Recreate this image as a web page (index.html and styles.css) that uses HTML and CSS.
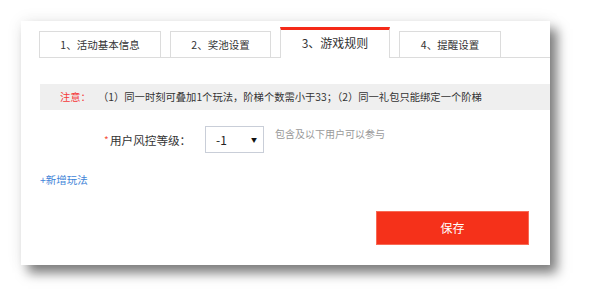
FILE: index.html
```html
<!DOCTYPE html>
<html lang="zh-CN">
<head>
<meta charset="utf-8">
<title>游戏规则</title>
<link rel="stylesheet" href="styles.css">
</head>
<body>
<div class="card">
  <div class="tabs">
    <div class="tab tab-1">1、活动基本信息</div>
    <div class="tab tab-2">2、奖池设置</div>
    <div class="tab tab-3 active">3、游戏规则</div>
    <div class="tab tab-4">4、提醒设置</div>
  </div>
  <div class="notice">
    <span class="notice-label">注意：</span>
    <span class="notice-text">（1）同一时刻可叠加1个玩法，阶梯个数需小于33；（2）同一礼包只能绑定一个阶梯</span>
  </div>
  <div class="form-row">
    <span class="req">*</span><span class="label">用户风控等级：</span>
    <div class="select"><span class="select-val">-1</span><span class="arrow">▼</span></div>
    <span class="hint">包含及以下用户可以参与</span>
  </div>
  <div class="add">+新增玩法</div>
  <div class="actions">
    <button class="save">保存</button>
  </div>
</div>
</body>
</html>
```
FILE: styles.css
```css
html, body {
  margin: 0;
  padding: 0;
  background: #fff;
}
body {
  width: 592px;
  height: 307px;
  overflow: hidden;
  font-family: "Noto Sans CJK SC", "Noto Sans", sans-serif;
  color: #333;
}
.card {
  margin: 21px 0 0 21px;
  width: 529px;
  height: 244px;
  box-sizing: border-box;
  padding-left: 18px;
  background: #fff;
  box-shadow: 7px 8px 11px rgba(0, 0, 0, 0.5), 0 0 16px rgba(0, 0, 0, 0.07);
  display: flex;
  flex-direction: column;
}
.tabs {
  margin-top: 6px;
  height: 30px;
  display: flex;
  align-items: flex-end;
  gap: 9px;
  border-bottom: 1px solid #dcdcdc;
}
.tab {
  box-sizing: border-box;
  height: 26px;
  border: 1px solid #dcdcdc;
  border-bottom: none;
  display: flex;
  align-items: center;
  justify-content: center;
  font-size: 10.5px;
  line-height: 14px;
  color: #333;
  background: #fff;
}
.tab-1 { width: 122px; }
.tab-2 { width: 101px; }
.tab-3 { width: 110px; }
.tab-4 { width: 102px; }
.tab.active {
  height: 31px;
  margin-bottom: -1px;
  border-top: 3px solid #f52a18;
  font-size: 12px;
  padding-bottom: 3px;
}
.notice {
  margin-top: 26px;
  margin-left: 1px;
  height: 26px;
  background: #efefef;
  display: flex;
  align-items: center;
  padding-left: 20px;
  font-size: 10.3px;
  line-height: 14px;
}
.notice-label {
  color: #f53b3b;
  width: 38px;
}
.notice-text {
  color: #333;
}
.form-row {
  margin-top: 16px;
  height: 27px;
  display: flex;
  align-items: center;
  padding-left: 65px;
}
.req {
  color: #f5533d;
  font-size: 10px;
  width: 6px;
  line-height: 12px;
}
.label {
  font-size: 11.6px;
  line-height: 14px;
  color: #333;
  width: 95px;
}
.select {
  box-sizing: border-box;
  width: 59px;
  height: 27px;
  border: 1px solid #c9ced8;
  display: flex;
  align-items: center;
  padding-left: 10px;
  padding-right: 6px;
}
.select-val {
  font-size: 12px;
  line-height: 14px;
  color: #222;
  flex: 1;
}
.arrow {
  font-size: 6px;
  line-height: 10px;
  color: #111;
}
.hint {
  align-self: flex-start;
  margin-top: 1px;
  margin-left: 11px;
  font-size: 10px;
  line-height: 14px;
  color: #999;
}
.add {
  margin-top: 20px;
  margin-left: 1px;
  font-size: 10.5px;
  line-height: 14px;
  color: #3f85d8;
}
.actions {
  margin-top: 24px;
  display: flex;
  justify-content: flex-end;
  padding-right: 21px;
}
.save {
  width: 153px;
  height: 34px;
  border: 1px solid #f86a55;
  background: #f5311a;
  color: #fff;
  font-family: "Noto Sans CJK SC", "Noto Sans", sans-serif;
  font-size: 12px;
  line-height: 14px;
  padding: 0;
}
```
